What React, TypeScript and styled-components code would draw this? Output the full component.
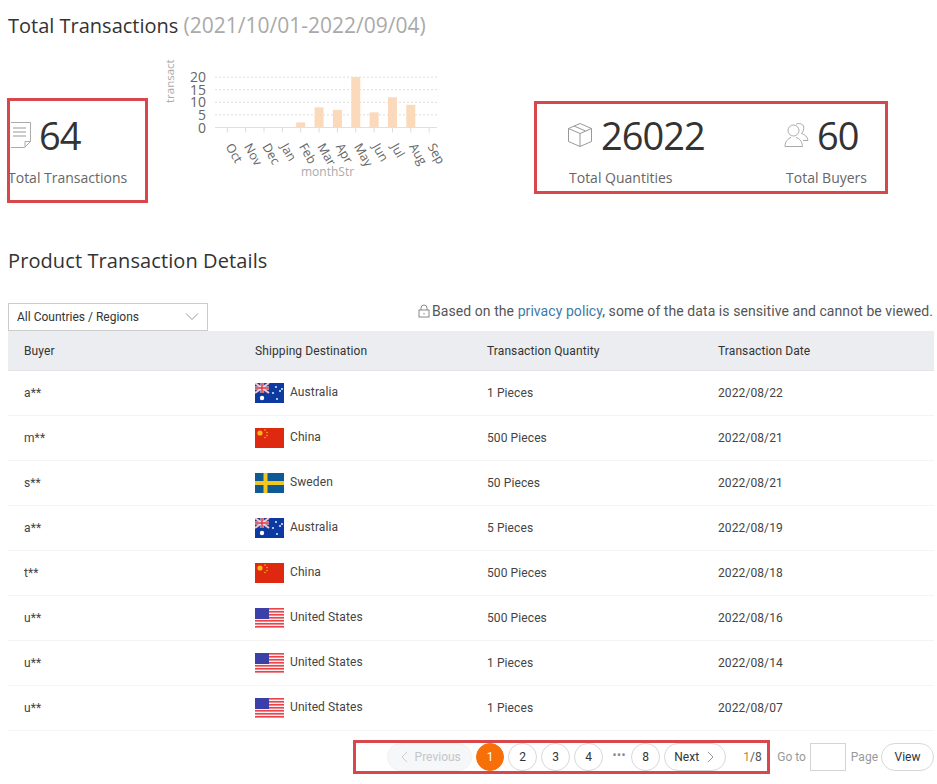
import React from "react";
import styled, { createGlobalStyle } from "styled-components";

const Global = createGlobalStyle`
  html, body { margin: 0; padding: 0; background: #fff; }
  * { box-sizing: border-box; }
  body { font-family: "Roboto", "Liberation Sans", sans-serif; color: #333; }
`;

const RED = "#d8474c";
const HEAD = `"Open Sans", "Noto Sans", sans-serif`;

const Page = styled.div`
  width: 937px;
  height: 784px;
  overflow: hidden;
  padding: 11px 3px 0 8px;
`;
const Title = styled.h1`
  margin: 0;
  font: 400 20px/28px ${HEAD};
  color: #333;
  height: 28px;
  span { color: #aaa; font-size: 21px; }
`;
const Summary = styled.section`
  display: flex;
  align-items: flex-start;
  height: 180px;
  margin-top: 11px;
`;
const Frame = styled.div`
  border: 3px solid ${RED};
`;
const LeftFrame = styled(Frame)`
  width: 141px;
  height: 105px;
  margin: 48px 0 0 -1px;
  padding-top: 12px;
`;
const RightFrame = styled(Frame)`
  width: 354px;
  height: 93px;
  margin: 51px 0 0 89px;
  padding: 9px 18px 0 30px;
  display: flex;
  justify-content: space-between;
`;
const Chart = styled.svg`
  display: block;
  width: 285px;
  height: 140px;
  margin-left: 12px;
  flex: none;
  overflow: visible;
`;
const Stat = styled.div`
  display: flex;
  flex-direction: column;
`;
const StatTop = styled.div`
  display: flex;
  align-items: center;
  gap: 8px;
  height: 44px;
`;
const StatValue = styled.span`
  font: 400 38px/44px ${HEAD};
  letter-spacing: -1px;
  color: #333;
`;
const StatLabel = styled.span`
  font: 400 14px/20px ${HEAD};
  color: #666;
  margin: 11px 0 0 2px;
  white-space: nowrap;
`;
const LeftStatLabel = styled(StatLabel)`
  margin: 11px 0 0 -2px;
`;
const SectionTitle = styled.h2`
  margin: 17px 0 0;
  font: 400 20px/28px ${HEAD};
  letter-spacing: 0.1px;
  color: #333;
  height: 28px;
`;
const Toolbar = styled.div`
  display: flex;
  justify-content: space-between;
  align-items: flex-start;
  margin-top: 28px;
  height: 28px;
`;
const Select = styled.div`
  width: 200px;
  height: 28px;
  border: 1px solid #ccc;
  padding: 0 8px 1px;
  display: flex;
  align-items: center;
  justify-content: space-between;
  font-size: 12px;
  color: #333;
`;
const Notice = styled.div`
  display: flex;
  align-items: center;
  gap: 2px;
  margin: 0 1px 0 0;
  font-size: 14px;
  letter-spacing: 0.07px;
  line-height: 16px;
  color: #555;
  a { color: #3d7ba8; text-decoration: none; }
`;
const Table = styled.div`
  width: 926px;
  letter-spacing: 0.1px;
`;
const gridCols = "247px 232px 231px 216px";
const HeadRow = styled.div`
  display: grid;
  grid-template-columns: ${gridCols};
  height: 40px;
  background: #ebedf0;
  align-items: center;
  font-size: 12px;
  color: #333;
  border-bottom: 1px solid #e2e4e7;
`;
const Row = styled.div`
  display: grid;
  grid-template-columns: ${gridCols};
  height: 45px;
  align-items: center;
  font-size: 12px;
  color: #444;
  border-bottom: 1px solid #f4f4f4;
`;
const Cell = styled.div`
  white-space: nowrap;
`;
const BuyerCell = styled(Cell)`
  padding-left: 16px;
`;
const CountryCell = styled(Cell)`
  display: flex;
  align-items: center;
  gap: 6px;
  span { position: relative; top: -1px; }
`;
const Footer = styled.div`
  display: flex;
  justify-content: flex-end;
  align-items: center;
  margin-top: 9px;
  width: 926px;
  height: 34px;
  font-size: 12px;
`;
const Pager = styled(Frame)`
  width: 417px;
  height: 34px;
  display: flex;
  align-items: center;
  padding-left: 31px;
`;
const PillBase = styled.button`
  height: 28px;
  border-radius: 14px;
  border: 1px solid #d8d8d8;
  background: #fff;
  color: #333;
  font: 400 12px "Roboto", sans-serif;
  padding: 0;
  display: inline-flex;
  align-items: center;
  justify-content: center;
  flex: none;
`;
const PageBtn = styled(PillBase)<{ $active?: boolean }>`
  width: 29px;
  margin-right: 4px;
  ${(p) => p.$active && `background: #f66f08; border-color: #f66f08; color: #fff; width: 28px;`}
`;
const Prev = styled(PillBase)`
  width: 85px;
  margin-right: 4px;
  gap: 4px;
  background: #f6f7f8;
  border-color: #f1f1f1;
  color: #c4c6c9;
`;
const Next = styled(PillBase)`
  width: 62px;
  gap: 5px;
`;
const Dots = styled.span`
  width: 28px;
  text-align: center;
  color: #888;
  font-size: 12px;
  letter-spacing: 0.5px;
  line-height: 10px;
  margin: 0 -2px;
  position: relative;
  top: -2px;
`;
const Count = styled.span`
  margin-left: 17px;
  color: #555;
  b { font-weight: 400; color: #c08a3e; }
`;
const GoLabel = styled.span`
  color: #999;
  margin: 0 4px 0 7px;
`;
const PageLabel = styled(GoLabel)`
  margin: 0 4px 0 5px;
`;
const GoInput = styled.div`
  width: 36px;
  height: 28px;
  border: 1px solid #d4d4d4;
`;
const View = styled(PillBase)`
  width: 53px;
  margin-left: -1px;
`;

const Doc = () => (
  <svg width="21" height="28" viewBox="2 0 21 28" fill="none" stroke="#aaa" strokeWidth="1">
    <path d="M3 1.500h19.500v19l-6 6H3" />
    <path d="M22.500 20.500h-5.500v6" />
    <path d="M5 7h13M5 11h13M5 15h13" stroke="#999" />
  </svg>
);
const BoxIcon = () => (
  <svg width="26" height="26" viewBox="0 0 26 26" fill="none" stroke="#999" strokeWidth="1">
    <path d="M13 1.500l11.500 5v13L13 24.500 1.500 19.500v-13z" />
    <path d="M1.500 6.500L13 11.500l11.500-5M13 11.500v13M7 4l11.500 5" />
  </svg>
);
const UsersIcon = () => (
  <svg width="25" height="26" viewBox="0 0 25 26" fill="none" stroke="#aaa" strokeWidth="1">
    <circle cx="9.500" cy="8.500" r="5.500" />
    <path d="M1 24.500c0-5 3-8 6-9M12 15.500c3 1 6 3 6.500 9H1" />
    <path d="M12 2.500c1-1.500 6-1.500 7.500 1.500 1 3-.5 6-2 7.500 3 1 6 3 6.500 7h-5" />
  </svg>
);
const Lock = () => (
  <svg width="12" height="14" viewBox="0 0 12 14" fill="none" stroke="#888" strokeWidth="1">
    <rect x="1" y="6" width="10" height="7" />
    <path d="M3 6V4a3 3 0 0 1 6 0v2" />
    <path d="M6 9v1.500" />
  </svg>
);
const Chevron = ({ dir, color = "#888", size = 12 }: { dir: "down" | "left" | "right"; color?: string; size?: number }) => {
  const d = dir === "down" ? "M1 3.500l6 6 6-6" : dir === "left" ? "M9.500 1l-6 6 6 6" : "M4.500 1l6 6-6 6";
  return (
    <svg width={size} height={size} viewBox="0 0 14 14" fill="none" stroke={color} strokeWidth="1">
      <path d={d} />
    </svg>
  );
};

const FlagSvg = styled.svg`
  display: block;
  flex: none;
  width: 29px;
  height: 20px;
`;
const UK = () => (
  <g>
    <rect width="14" height="10" fill="#2a3a8f" />
    <path d="M0 0l14 10M14 0L0 10" stroke="#f3c6cb" strokeWidth="2" />
    <path d="M7 0v10M0 5h14" stroke="#f3e3e5" strokeWidth="3" />
    <path d="M7 0v10M0 5h14" stroke="#d9384a" strokeWidth="1.500" />
  </g>
);
const Flag = ({ code }: { code: string }) => {
  if (code === "au")
    return (
      <FlagSvg viewBox="0 0 29 20">
        <rect width="29" height="20" fill="#0d3aa0" />
        <UK />
        <circle cx="7" cy="15" r="2.200" fill="#fff" />
        {[[21, 4], [25, 8], [18, 10], [22, 16], [27, 6]].map(([x, y], i) => (
          <circle key={i} cx={x} cy={y} r="1.100" fill="#cfe0ff" />
        ))}
      </FlagSvg>
    );
  if (code === "cn")
    return (
      <FlagSvg viewBox="0 0 29 20">
        <rect width="29" height="20" fill="#de2910" />
        <circle cx="5" cy="5" r="2.600" fill="#f9b51a" />
        {[[10, 2], [12, 4.500], [12, 7.500], [10, 9.500]].map(([x, y], i) => (
          <circle key={i} cx={x} cy={y} r="0.800" fill="#f9b51a" />
        ))}
      </FlagSvg>
    );
  if (code === "se")
    return (
      <FlagSvg viewBox="0 0 29 20">
        <rect width="29" height="20" fill="#0f5a94" />
        <path d="M10.500 0v20M0 10h29" stroke="#f2c81e" strokeWidth="4" />
      </FlagSvg>
    );
  return (
    <FlagSvg viewBox="0 0 29 20">
      <rect width="29" height="20" fill="#fbeeee" />
      {[0, 3, 6, 9, 12, 15, 18].map((y) => (
        <rect key={y} y={y} width="29" height="1.600" fill="#e8444c" />
      ))}
      <rect width="14" height="11" fill="#3b3fa8" />
    </FlagSvg>
  );
};

const months = ["Oct", "Nov", "Dec", "Jan", "Feb", "Mar", "Apr", "May", "Jun", "Jul", "Aug", "Sep"];
const values = [0, 0, 0, 0, 2, 8, 7, 20, 6, 12, 9, 0];

const BarChart = () => {
  const ox = 160, oy = 50;
  const baseY = 127.500 - oy;
  const unit = 2.520;
  const tickX = (i: number) => 227.300 + i * 18.350 - ox;
  return (
    <Chart viewBox="0 0 285 140">
      <text transform="translate(14 53) rotate(-90)" fontSize="11.500" fill="#aaa" fontFamily="Open Sans, sans-serif">transact</text>
      {[20, 15, 10, 5].map((v) => (
        <line key={v} x1={55} x2={277} y1={baseY - v * unit} y2={baseY - v * unit} stroke="#ddd" strokeDasharray="2 2" />
      ))}
      {[20, 15, 10, 5, 0].map((v) => (
        <text key={v} x={46} y={baseY - v * unit + 5} textAnchor="end" fontSize="14" fill="#666" fontFamily="Open Sans, sans-serif">{v}</text>
      ))}
      {values.map((v, i) =>
        v ? <rect key={i} x={tickX(i) - 4.500} y={baseY - v * unit} width={9} height={v * unit} fill="#fbd9bb" /> : null
      )}
      <line x1={55} x2={277} y1={baseY} y2={baseY} stroke="#e5dfda" />
      {months.map((m, i) => (
        <g key={m}>
          <line x1={tickX(i)} x2={tickX(i)} y1={baseY} y2={baseY + 5} stroke="#ddd" />
          <text transform={`translate(${tickX(i) - 2} ${baseY + 19}) rotate(60)`} fontSize="12.500" fill="#666" fontFamily="Open Sans, sans-serif">{m}</text>
        </g>
      ))}
      <text x={141} y={126} fontSize="12" fill="#aaa" fontFamily="Open Sans, sans-serif">monthStr</text>
    </Chart>
  );
};

const rows = [
  ["a**", "au", "Australia", "1 Pieces", "2022/08/22"],
  ["m**", "cn", "China", "500 Pieces", "2022/08/21"],
  ["s**", "se", "Sweden", "50 Pieces", "2022/08/21"],
  ["a**", "au", "Australia", "5 Pieces", "2022/08/19"],
  ["t**", "cn", "China", "500 Pieces", "2022/08/18"],
  ["u**", "us", "United States", "500 Pieces", "2022/08/16"],
  ["u**", "us", "United States", "1 Pieces", "2022/08/14"],
  ["u**", "us", "United States", "1 Pieces", "2022/08/07"],
];

export default function App() {
  return (
    <Page>
      <Global />
      <Title>
        Total Transactions <span>(2021/10/01-2022/09/04)</span>
      </Title>
      <Summary>
        <LeftFrame>
          <Stat>
            <StatTop>
              <Doc />
              <StatValue>64</StatValue>
            </StatTop>
            <LeftStatLabel>Total Transactions</LeftStatLabel>
          </Stat>
        </LeftFrame>
        <BarChart />
        <RightFrame>
          <Stat>
            <StatTop>
              <BoxIcon />
              <StatValue>26022</StatValue>
            </StatTop>
            <StatLabel>Total Quantities</StatLabel>
          </Stat>
          <Stat>
            <StatTop>
              <UsersIcon />
              <StatValue>60</StatValue>
            </StatTop>
            <StatLabel>Total Buyers</StatLabel>
          </Stat>
        </RightFrame>
      </Summary>
      <SectionTitle>Product Transaction Details</SectionTitle>
      <Toolbar>
        <Select>
          All Countries / Regions
          <Chevron dir="down" size={14} color="#999" />
        </Select>
        <Notice>
          <Lock />
          <span>
            Based on the <a href="#p">privacy policy</a>, some of the data is sensitive and cannot be viewed.
          </span>
        </Notice>
      </Toolbar>
      <Table>
        <HeadRow>
          <BuyerCell>Buyer</BuyerCell>
          <Cell>Shipping Destination</Cell>
          <Cell>Transaction Quantity</Cell>
          <Cell>Transaction Date</Cell>
        </HeadRow>
        {rows.map((r, i) => (
          <Row key={i}>
            <BuyerCell>{r[0]}</BuyerCell>
            <CountryCell>
              <Flag code={r[1]} />
              <span>{r[2]}</span>
            </CountryCell>
            <Cell>{r[3]}</Cell>
            <Cell>{r[4]}</Cell>
          </Row>
        ))}
      </Table>
      <Footer>
        <Pager>
          <Prev>
            <Chevron dir="left" color="#c4c6c9" />
            Previous
          </Prev>
          <PageBtn $active>1</PageBtn>
          <PageBtn>2</PageBtn>
          <PageBtn>3</PageBtn>
          <PageBtn>4</PageBtn>
          <Dots>•••</Dots>
          <PageBtn>8</PageBtn>
          <Next>
            Next
            <Chevron dir="right" />
          </Next>
          <Count>
            <b>1</b>/8
          </Count>
        </Pager>
        <GoLabel>Go to</GoLabel>
        <GoInput />
        <PageLabel>Page</PageLabel>
        <View>View</View>
      </Footer>
    </Page>
  );
}
